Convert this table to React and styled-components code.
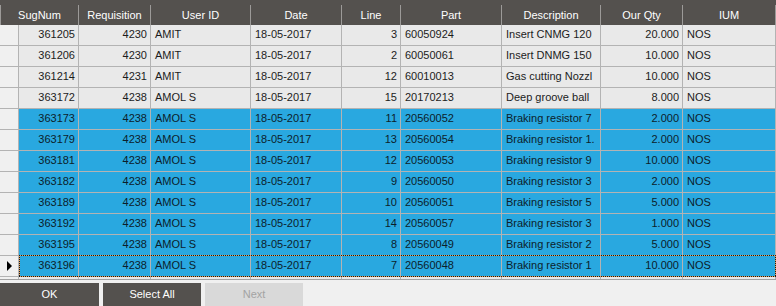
import React from "react";
import styled, { createGlobalStyle } from "styled-components";

const GlobalStyle = createGlobalStyle`
  html, body {
    margin: 0;
    padding: 0;
    background: #f0f0f0;
  }
  body {
    font-family: "Liberation Sans", Arial, sans-serif;
    font-size: 11px;
  }
`;

const columns = [
  { key: "sug", title: "SugNum", width: 60, align: "right" },
  { key: "req", title: "Requisition", width: 72, align: "right" },
  { key: "user", title: "User ID", width: 100, align: "left" },
  { key: "date", title: "Date", width: 91, align: "left" },
  { key: "line", title: "Line", width: 59, align: "right" },
  { key: "part", title: "Part", width: 101, align: "left" },
  { key: "desc", title: "Description", width: 99, align: "left" },
  { key: "qty", title: "Our Qty", width: 82, align: "right" },
  { key: "ium", title: "IUM", width: 93, align: "left" },
];

const rows = [
  ["361205", "4230", "AMIT", "18-05-2017", "3", "60050924", "Insert CNMG 120", "20.000", "NOS"],
  ["361206", "4230", "AMIT", "18-05-2017", "2", "60050061", "Insert DNMG 150", "10.000", "NOS"],
  ["361214", "4231", "AMIT", "18-05-2017", "12", "60010013", "Gas cutting Nozzl", "10.000", "NOS"],
  ["363172", "4238", "AMOL S", "18-05-2017", "15", "20170213", "Deep groove ball", "8.000", "NOS"],
  ["363173", "4238", "AMOL S", "18-05-2017", "11", "20560052", "Braking resistor 7", "2.000", "NOS", true],
  ["363179", "4238", "AMOL S", "18-05-2017", "13", "20560054", "Braking resistor 1.", "2.000", "NOS", true],
  ["363181", "4238", "AMOL S", "18-05-2017", "12", "20560053", "Braking resistor 9", "10.000", "NOS", true],
  ["363182", "4238", "AMOL S", "18-05-2017", "9", "20560050", "Braking resistor 3", "2.000", "NOS", true],
  ["363189", "4238", "AMOL S", "18-05-2017", "10", "20560051", "Braking resistor 5", "5.000", "NOS", true],
  ["363192", "4238", "AMOL S", "18-05-2017", "14", "20560057", "Braking resistor 3", "1.000", "NOS", true],
  ["363195", "4238", "AMOL S", "18-05-2017", "8", "20560049", "Braking resistor 2", "5.000", "NOS", true],
  ["363196", "4238", "AMOL S", "18-05-2017", "7", "20560048", "Braking resistor 1", "10.000", "NOS", true],
  ["363201", "4244", "STORE", "18-05-2017", "2", "20140077", "LUBRICATION W", "200.000", "LTR"],
];

const CURRENT = 11;

const Page = styled.div`
  display: flex;
  flex-direction: column;
  width: 776px;
  height: 306px;
  overflow: hidden;
`;

const Grid = styled.div`
  height: 283px;
  overflow: hidden;
  border-bottom: 1px solid #a0a0a0;
  background: #f0f0f0;
`;

const HeaderRow = styled.div`
  display: flex;
  padding-top: 5px;
  background: #54514e;
`;

const HeaderCell = styled.div`
  box-sizing: border-box;
  width: ${(p) => p.$width}px;
  height: 20px;
  display: flex;
  align-items: center;
  justify-content: center;
  color: #ffffff;
  border-left: ${(p) => (p.$first ? "1px solid #9c9a98" : "none")};
  border-right: 1px solid #9c9a98;
  white-space: nowrap;
`;

const Row = styled.div`
  position: relative;
  display: flex;
  height: 21px;
  background: ${(p) => (p.$selected ? "#29a8e0" : "#e9e9e9")};
  color: ${(p) => (p.$selected ? "#0c1d2b" : "#1c1c1c")};
`;

// dotted focus rectangle around the current row
const FocusRect = styled.div`
  position: absolute;
  left: 19px;
  right: 0;
  top: -1px;
  bottom: 0;
  pointer-events: none;
  background-image:
    repeating-linear-gradient(90deg, #1a1a1a 0 1px, #e9a25a 1px 2px),
    repeating-linear-gradient(90deg, #1a1a1a 0 1px, #e9a25a 1px 2px),
    repeating-linear-gradient(180deg, #1a1a1a 0 1px, #e9a25a 1px 2px),
    repeating-linear-gradient(180deg, #1a1a1a 0 1px, #e9a25a 1px 2px);
  background-size: 100% 1px, 100% 1px, 1px 100%, 1px 100%;
  background-position: top left, bottom left, top left, top right;
  background-repeat: no-repeat;
`;

const RowHeader = styled.div`
  box-sizing: border-box;
  width: 19px;
  height: 21px;
  background: #f0f0f0;
  border-right: 1px solid #b3b3b3;
  border-bottom: 1px solid #b3b3b3;
  display: flex;
  align-items: center;
  padding-left: 7px;
  padding-bottom: 1px;
`;

const Arrow = styled.div`
  width: 0;
  height: 0;
  border-top: 5px solid transparent;
  border-bottom: 5px solid transparent;
  border-left: 5px solid #000;
`;

const Cell = styled.div`
  box-sizing: border-box;
  width: ${(p) => p.$width}px;
  height: 21px;
  display: flex;
  align-items: center;
  justify-content: ${(p) => (p.$align === "right" ? "flex-end" : "flex-start")};
  padding: 0 3px 2px 4px;
  border-right: 1px solid #b3b3b3;
  border-bottom: 1px solid #b3b3b3;
  white-space: nowrap;
  overflow: hidden;
`;

const ButtonBar = styled.div`
  display: flex;
  gap: 4px;
  margin-top: 3px;
`;

const Button = styled.button`
  width: ${(p) => p.$width}px;
  height: 23px;
  border: none;
  padding: 0 0 2px;
  font-family: "Liberation Sans", Arial, sans-serif;
  font-size: 11px;
  background: ${(p) => (p.disabled ? "#d9d9d9" : "#54514e")};
  color: ${(p) => (p.disabled ? "#a3a3a3" : "#ffffff")};
`;

export default function App() {
  return (
    <Page>
      <GlobalStyle />
      <Grid>
        <HeaderRow>
          {columns.map((c, i) => (
            <HeaderCell key={c.key} $width={i === 0 ? c.width + 19 : c.width} $first={i === 0}>
              {c.title}
            </HeaderCell>
          ))}
        </HeaderRow>
        {rows.map((r, ri) => (
          <Row key={r[0]} $selected={r[9] === true}>
            <RowHeader>{ri === CURRENT && <Arrow />}</RowHeader>
            {columns.map((c, ci) => (
              <Cell key={c.key} $width={c.width} $align={c.align}>
                {r[ci]}
              </Cell>
            ))}
            {ri === CURRENT && <FocusRect />}
          </Row>
        ))}
      </Grid>
      <ButtonBar>
        <Button $width={99}>OK</Button>
        <Button $width={98}>Select All</Button>
        <Button $width={98} disabled>
          Next
        </Button>
      </ButtonBar>
    </Page>
  );
}
